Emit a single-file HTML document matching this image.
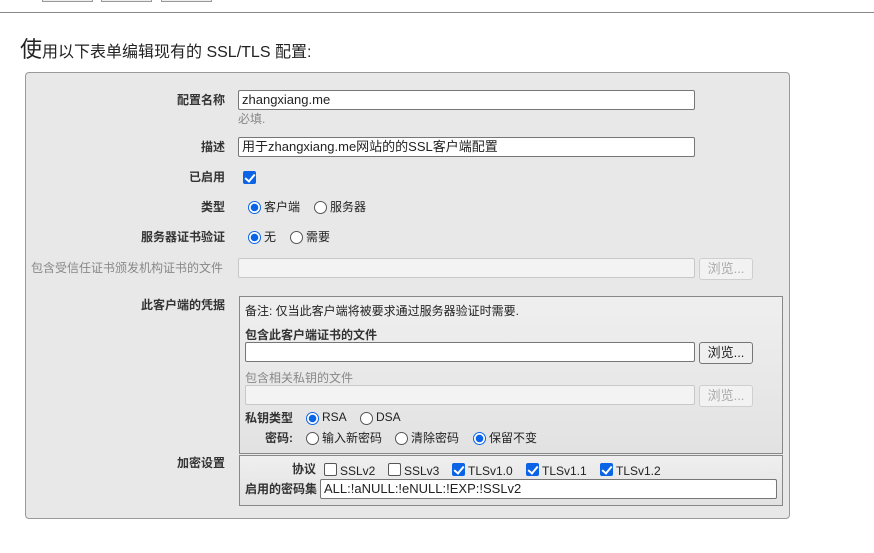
<!DOCTYPE html>
<html><head><meta charset="utf-8"><style>
*{box-sizing:border-box;margin:0;padding:0}
body{width:874px;height:553px;background:#fff;position:relative;overflow:hidden;font-family:"Liberation Sans","Noto Sans CJK SC",sans-serif;font-size:12px;color:#222}
.a{position:absolute;white-space:nowrap;line-height:14px}
.lb{position:absolute;right:649px;white-space:nowrap;font-weight:bold;color:#333;line-height:14px}
.b{font-weight:bold;color:#333}
.g{color:#888}
.in{position:absolute;height:20px;border:1px solid #767676;background:#fff;border-radius:2px;font-size:13px;line-height:18px;padding-left:3px}
.dis{background:#f3f3f3;border-color:#c8c8c8}
.btn{position:absolute;width:54px;height:22px;border:1px solid #767676;border-radius:3px;background:#efefef;font-size:13px;text-align:center;line-height:20px}
.btn.d{color:#aaa;border-color:#cfcfcf;background:#f2f2f2}
.r{position:absolute;width:13px;height:13px;border:1px solid #555;border-radius:50%;background:#fff}
.r.on{border:1px solid #0b63e6;background:radial-gradient(circle,#0b63e6 0 3.5px,#fff 4px)}
.c{position:absolute;width:13px;height:13px;border:1px solid #555;border-radius:2px;background:#fff}
.c.on{background:#0b63e6;border-color:#0b63e6}
.c.on:after{content:"";position:absolute;left:3px;top:0px;width:4px;height:8px;border:solid #fff;border-width:0 2px 2px 0;transform:rotate(40deg)}
.fs{position:absolute;left:239px;width:544px;border:1px solid #888;background:linear-gradient(#efefef,#e2e2e2)}
</style></head><body>
<div style="position:absolute;left:42px;top:-2px;width:51px;height:4px;border:1px solid #999;background:#eee"></div>
<div style="position:absolute;left:101px;top:-2px;width:51px;height:4px;border:1px solid #999;background:#eee"></div>
<div style="position:absolute;left:161px;top:-2px;width:51px;height:4px;border:1px solid #999;background:#eee"></div>
<div style="position:absolute;left:0;top:12px;width:874px;height:1px;background:#888"></div>
<div class="a" style="left:20px;top:38px;line-height:24px;font-size:16px"><span style="font-size:22px">使</span>用以下表单编辑现有的 SSL/TLS 配置:</div>
<div style="position:absolute;left:25px;top:72px;width:765px;height:447px;background:#e8e8e8;border:1px solid #999;border-radius:4px"></div>

<div class="lb" style="top:93px">配置名称</div>
<div class="in" style="left:238px;top:90px;width:457px">zhangxiang.me</div>
<div class="a g" style="left:238px;top:112px">必填.</div>
<div class="lb" style="top:140px">描述</div>
<div class="in" style="left:238px;top:137px;width:457px">用于zhangxiang.me网站的的SSL客户端配置</div>
<div class="lb" style="top:170px">已启用</div>
<div class="c on" style="left:243px;top:171px"></div>
<div class="lb" style="top:200px">类型</div>
<div class="r on" style="left:248px;top:201px"></div><div class="a" style="left:264px;top:200px">客户端</div>
<div class="r" style="left:314px;top:201px"></div><div class="a" style="left:330px;top:200px">服务器</div>
<div class="lb" style="top:230px">服务器证书验证</div>
<div class="r on" style="left:248px;top:231px"></div><div class="a" style="left:264px;top:230px">无</div>
<div class="r" style="left:290px;top:231px"></div><div class="a" style="left:306px;top:230px">需要</div>
<div class="a g" style="left:31px;top:261px">包含受信任证书颁发机构证书的文件</div>
<div class="in dis" style="left:238px;top:258px;width:457px"></div>
<div class="btn d" style="left:699px;top:258px">浏览...</div>
<div class="lb" style="top:298px">此客户端的凭据</div>
<div class="fs" style="top:296px;height:158px"></div>
<div class="a" style="left:245px;top:304px">备注: 仅当此客户端将被要求通过服务器验证时需要.</div>
<div class="a b" style="left:245px;top:328px">包含此客户端证书的文件</div>
<div class="in" style="left:245px;top:342px;width:450px"></div>
<div class="btn" style="left:699px;top:342px">浏览...</div>
<div class="a g" style="left:245px;top:371px">包含相关私钥的文件</div>
<div class="in dis" style="left:245px;top:385px;width:450px"></div>
<div class="btn d" style="left:699px;top:385px">浏览...</div>
<div class="a b" style="left:245px;top:411px">私钥类型</div>
<div class="r on" style="left:306px;top:412px"></div><div class="a" style="left:322px;top:410px">RSA</div>
<div class="r" style="left:360px;top:412px"></div><div class="a" style="left:376px;top:410px">DSA</div>
<div class="a b" style="left:265px;top:431px">密码:</div>
<div class="r" style="left:306px;top:432px"></div><div class="a" style="left:322px;top:431px">输入新密码</div>
<div class="r" style="left:395px;top:432px"></div><div class="a" style="left:411px;top:431px">清除密码</div>
<div class="r on" style="left:473px;top:432px"></div><div class="a" style="left:489px;top:431px">保留不变</div>
<div class="lb" style="top:456px">加密设置</div>
<div class="fs" style="top:455px;height:51px"></div>
<div class="a b" style="left:292px;top:462px">协议</div>
<div class="c" style="left:324px;top:463px"></div><div class="a" style="left:340px;top:464px">SSLv2</div>
<div class="c" style="left:388px;top:463px"></div><div class="a" style="left:404px;top:464px">SSLv3</div>
<div class="c on" style="left:452px;top:463px"></div><div class="a" style="left:468px;top:464px">TLSv1.0</div>
<div class="c on" style="left:526px;top:463px"></div><div class="a" style="left:542px;top:464px">TLSv1.1</div>
<div class="c on" style="left:600px;top:463px"></div><div class="a" style="left:616px;top:464px">TLSv1.2</div>
<div class="a b" style="left:245px;top:482px">启用的密码集</div>
<div class="in" style="left:320px;top:479px;width:457px">ALL:!aNULL:!eNULL:!EXP:!SSLv2</div>
</body></html>
